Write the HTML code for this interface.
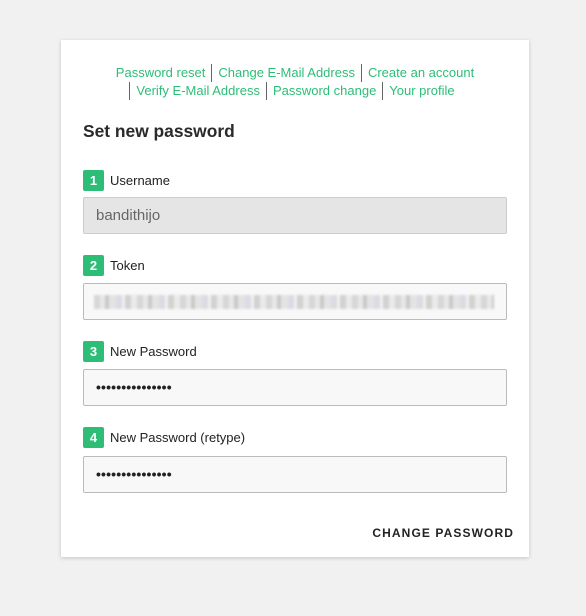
<!DOCTYPE html>
<html><head><meta charset="utf-8"><style>
*{box-sizing:border-box;margin:0;padding:0}
body{width:586px;height:616px;background:#f1f1f1;font-family:"Liberation Sans",Arial,sans-serif;position:relative;overflow:hidden}
.card{position:absolute;left:61px;top:40px;width:468px;height:517px;background:#fff;box-shadow:0 1px 4px rgba(0,0,0,.18)}
.links{position:absolute;left:0;width:100%;text-align:center;font-size:13px;color:#2ebd77;line-height:18px}
.links span{display:inline-block;padding:0 6px;border-left:1px solid #666;line-height:18px}
.links span.f{border-left:none}
h2{position:absolute;left:22px;top:81px;font-size:17.4px;font-weight:bold;color:#2a2a2a}
.badge{position:absolute;left:22px;width:21px;height:21px;background:#2ebd77;color:#fff;border-radius:2px;font-size:13px;font-weight:bold;text-align:center;line-height:21px}
.lab{position:absolute;left:49px;font-size:13px;color:#222;line-height:21px}
.inp{position:absolute;left:22px;width:424px;height:37px;background:#f8f8f8;border:1px solid #bbb;border-radius:2px;font-size:15px;padding-left:12px;line-height:35px;color:#222}
.dots{font-size:14px;letter-spacing:0.15px;font-weight:bold}
.btn{position:absolute;right:15px;top:486px;font-size:12px;font-weight:bold;letter-spacing:1.1px;color:#222}
.blur{position:absolute;left:10px;top:11px;width:400px;height:14px;background:repeating-linear-gradient(90deg,#ccc 0 6px,#e2e2e2 6px 11px,#bbb 11px 15px,#ddd 15px 22px,#d2d2dc 22px 28px,#eee 28px 31px,#c8c4c4 31px 37px,#e6e6e6 37px 43px);opacity:.75;filter:blur(1px)}
</style></head><body>
<div class="card">
<div class="links" style="top:24px"><span class="f">Password reset</span><span>Change E-Mail Address</span><span>Create an account</span></div>
<div class="links" style="top:42px"><span>Verify E-Mail Address</span><span>Password change</span><span>Your profile</span></div>
<h2>Set new password</h2>
<div class="badge" style="top:130px">1</div><div class="lab" style="top:130px">Username</div>
<div class="inp" style="top:157px;background:#e5e5e5;border-color:#ccc;color:#666">bandithijo</div>
<div class="badge" style="top:215px">2</div><div class="lab" style="top:215px">Token</div>
<div class="inp" style="top:243px"><div class="blur"></div></div>
<div class="badge" style="top:301px">3</div><div class="lab" style="top:301px">New Password</div>
<div class="inp dots" style="top:329px">•••••••••••••••</div>
<div class="badge" style="top:387px">4</div><div class="lab" style="top:387px">New Password (retype)</div>
<div class="inp dots" style="top:416px">•••••••••••••••</div>
<div class="btn">CHANGE PASSWORD</div>
</div>
</body></html>
